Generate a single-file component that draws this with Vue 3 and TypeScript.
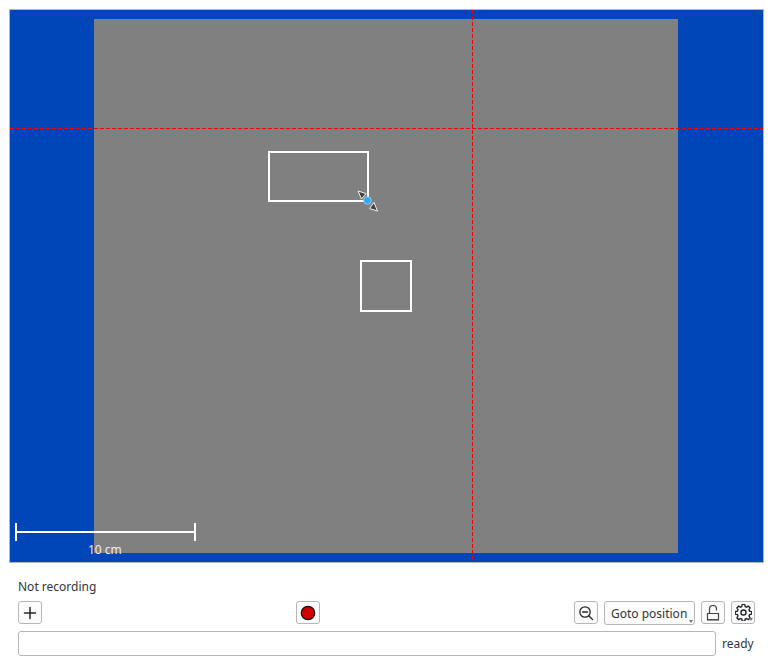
<template>
  <div class="page">
    <!-- Map view -->
    <div class="view">
      <svg class="scene" width="753" height="552" viewBox="10 10 753 552">
        <rect x="94" y="19" width="584" height="534" fill="#808080" />
        <rect x="269" y="152" width="99" height="49" class="shape" />
        <rect x="361" y="261" width="50" height="50" class="shape" />
        <line x1="472.5" y1="10" x2="472.5" y2="563" class="cross" />
        <line x1="10" y1="128.5" x2="764" y2="128.5" class="cross" />

        <!-- resize handle on the selected shape -->
        <path d="M358 191 L366 193.5 L361.5 199 Z" class="arrow" />
        <path d="M377.5 211 L369.5 208.5 L374 202.5 Z" class="arrow" />
        <circle cx="367.5" cy="200.5" r="3.8" class="handle" />

        <!-- scale bar -->
        <g class="scale">
          <line x1="16" y1="532" x2="195" y2="532" />
          <line x1="16" y1="523" x2="16" y2="541" />
          <line x1="195" y1="523" x2="195" y2="541" />
        </g>
      </svg>
      <span class="scale-label">10 cm</span>
    </div>

    <div class="status">Not recording</div>

    <div class="toolbar">
      <button class="tool" aria-label="Add">
        <svg width="16" height="16" viewBox="0 0 16 16">
          <path d="M8 2.5v11M2.5 8h11" class="icon" stroke-width="1.5" />
        </svg>
      </button>
      <div class="center">
        <button class="tool" aria-label="Record">
          <svg width="16" height="16" viewBox="0 0 16 16">
            <circle cx="8" cy="8" r="6.7" fill="#d40000" stroke="#111" stroke-width="1.2" />
          </svg>
        </button>
      </div>
      <div class="right">
        <button class="tool" aria-label="Zoom out">
          <svg width="16" height="16" viewBox="0 0 16 16">
            <circle cx="7" cy="7" r="5.2" class="icon" stroke-width="1.3" />
            <path d="M4.5 7h5M10.8 10.8l3.7 3.7" class="icon" stroke-width="1.3" />
          </svg>
        </button>
        <button class="combo">
          Goto position
          <i class="caret" />
        </button>
        <button class="tool" aria-label="Lock">
          <svg width="16" height="16" viewBox="0 0 16 16">
            <path d="M4.5 8V4a3.5 3.5 0 0 1 7 0V5.5" fill="none" stroke="#444" stroke-width="1.2" />
            <path d="M2.5 8.5h11v6.5h-11z" fill="none" stroke="#444" stroke-width="1.2" />
            <path d="M2.5 14.6h11" stroke="#444" stroke-width="1" />
          </svg>
        </button>
        <button class="tool" aria-label="Settings">
          <svg width="17" height="17" viewBox="0 0 16 16">
            <path d="M6.8 1h2.4l.4 2 1.2.6 1.8-1 1.6 1.7-1 1.7.5 1.3 2 .5v2.4l-2 .4-.5 1.3 1 1.7-1.6 1.7-1.8-1-1.2.5-.4 2H6.8l-.4-2-1.2-.5-1.8 1-1.6-1.7 1-1.7-.5-1.3-2-.4V7.8l2-.5.5-1.3-1-1.7 1.6-1.7 1.8 1 1.2-.6z" class="icon" stroke-width="1.3" transform="translate(0 -.6)" />
            <circle cx="8" cy="8" r="2.4" class="icon" stroke-width="1.3" />
          </svg>
          <i class="caret small" />
        </button>
      </div>
    </div>

    <div class="command">
      <input class="command-input" type="text" />
      <span class="state">ready</span>
    </div>
  </div>
</template>

<script setup lang="ts">
</script>

<style scoped>
.page {
  width: 773px;
  height: 666px;
  box-sizing: border-box;
  padding: 9px 9px 0;
  font-family: "Noto Sans", sans-serif;
  font-size: 12px;
  color: #31363b;
  background: #fff;
}

.view {
  position: relative;
  width: 755px;
  height: 554px;
  box-sizing: border-box;
  border: 1px solid #b4b6b8;
  background: #0046b8;
  overflow: hidden;
}
.scene {
  display: block;
}
.shape {
  fill: none;
  stroke: #fff;
  stroke-width: 2;
}
.cross {
  stroke: #f80000;
  stroke-width: 1;
  stroke-dasharray: 4 2;
}
.arrow {
  fill: #444;
  stroke: #f4f4f4;
  stroke-width: 1;
  stroke-linejoin: round;
}
.handle {
  fill: #2fa9f2;
  stroke: #9fd4f5;
  stroke-width: 0.8;
}
.scale line {
  stroke: #fff;
  stroke-width: 2;
}
.scale-label {
  position: absolute;
  left: 78px;
  top: 532px;
  font-size: 12px;
  line-height: 16px;
  color: #eceff1;
}

.status {
  margin: 15px 0 0 9px;
  height: 18px;
  line-height: 18px;
}

.toolbar {
  display: flex;
  align-items: flex-start;
  margin: 5px 0 0 9px;
  width: 737px;
  height: 23px;
}
.center {
  margin-left: 254px;
}
.right {
  display: flex;
  align-items: flex-start;
  gap: 6px;
  margin-left: auto;
}

.tool,
.combo {
  position: relative;
  display: flex;
  align-items: center;
  justify-content: center;
  height: 23px;
  box-sizing: border-box;
  padding: 0;
  border: 1px solid #b4b6b8;
  border-radius: 3px;
  background: #fcfcfc;
  color: inherit;
  font: inherit;
}
.tool {
  width: 24px;
}
.combo {
  width: 91px;
  height: 24px;
  white-space: nowrap;
  justify-content: flex-start;
  padding-left: 6px;
}
.icon {
  fill: none;
  stroke: #232629;
  stroke-linecap: round;
}
.caret {
  position: absolute;
  right: 1px;
  bottom: 1px;
  border-left: 2.5px solid transparent;
  border-right: 2.5px solid transparent;
  border-top: 3px solid #777;
}
.caret.small {
  right: 1px;
  bottom: 2px;
}

.command {
  display: flex;
  align-items: center;
  gap: 6px;
  margin: 7px 0 0 9px;
  height: 25px;
}
.command-input {
  width: 698px;
  height: 25px;
  box-sizing: border-box;
  border: 1px solid #b4b6b8;
  border-radius: 3px;
  background: #fff;
  outline: none;
}
</style>

<style>
html,
body {
  background: #fff;
  overflow: hidden;
}
</style>
